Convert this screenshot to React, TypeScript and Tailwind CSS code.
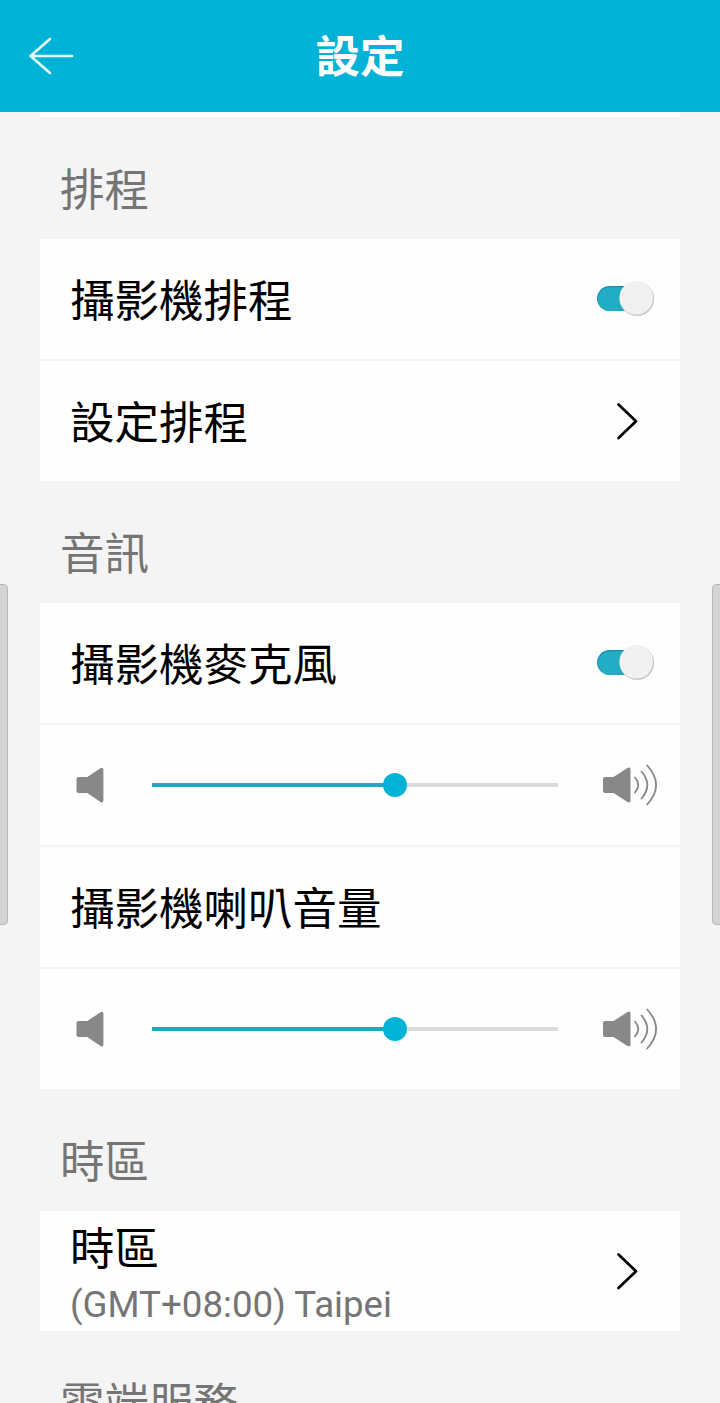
import { useState, type ReactNode } from 'react';

function Header({ title }: { title: string }) {
  return (
    <header className="relative flex h-28 shrink-0 items-center justify-center bg-[#00b2d5]">
      <button aria-label="返回" className="absolute left-7 top-8">
        <svg width="48" height="48" viewBox="0 0 48 48" fill="none" stroke="#e6ffff" strokeWidth="2.6" strokeLinecap="round" strokeLinejoin="round">
          <path d="M44 24H2.500M22 7L2.500 24 22 41" />
        </svg>
      </button>
      <h1 className="pt-1 text-[44.5px] leading-[64px] font-bold text-white">{title}</h1>
    </header>
  );
}

function Section({ title, children }: { title: string; children?: ReactNode }) {
  return (
    <section>
      <h2 className="h-[122px] pt-[42px] pl-5 text-[44.5px] leading-[64px] text-[#757575]">{title}</h2>
      <div className="flex flex-col gap-0.5">{children}</div>
    </section>
  );
}

function Row({ children }: { children: ReactNode }) {
  return <div className="flex h-[120px] items-center bg-[#fefefe] pl-[30px] text-black">{children}</div>;
}

function Label({ children }: { children: ReactNode }) {
  return <span className="flex-1 pt-1.5 text-[44.5px] leading-[64px]">{children}</span>;
}

function Toggle() {
  const [on, setOn] = useState(true);
  return (
    <button role="switch" aria-checked={on} onClick={() => setOn(!on)} className="mr-6 pb-0.5">
      <svg width="60" height="40" viewBox="0 0 60 40">
        <rect x="1" y="8" width="48" height="25" rx="12.5" fill={on ? '#168fb0' : '#aaaaaa'} />
        <rect x="2" y="9.3" width="47" height="23.7" rx="11.8" fill={on ? '#22adc5' : '#c4c4c4'} />
        <circle cx={on ? 41 : 19} cy="20.8" r="17.2" fill="#c9c9cb" />
        <circle cx={on ? 40.2 : 18.2} cy="19.8" r="16.8" fill="#f1f1f1" />
      </svg>
    </button>
  );
}

function Chevron() {
  return (
    <svg className="mr-10" width="26" height="40" viewBox="0 0 26 40" fill="none" stroke="#000" strokeWidth="2.7" strokeLinecap="round" strokeLinejoin="round">
      <path d="M4.500 3.500L22 20.300 4.500 37" />
    </svg>
  );
}

function SpeakerLow() {
  return (
    <svg width="28" height="42" viewBox="0 0 28 42" fill="#888888">
      <path d="M2.500 13h8.800L24.500 4.200Q27.400 3 27.400 5.800v30.800q0 2.800-2.900 1.400L11.300 29H2.500q-2 0-2-2V15q0-2 2-2z" />
    </svg>
  );
}

function SpeakerHigh() {
  return (
    <svg width="56" height="42" viewBox="0 0 56 42">
      <path d="M3 13h8.500L25.500 4Q28.500 2.700 28.500 5.500v31q0 2.800-3 1.500L11.500 29H3q-2 0-2-2V15q0-2 2-2z" fill="#888888" />
      <g fill="none" stroke="#888888" strokeWidth="1.8" strokeLinecap="round">
        <path d="M33 13.500q6.600 7.500 0 15" />
        <path d="M39.500 7.500q11.600 13.500 0 27" />
        <path d="M45.200 1.500q17.800 19.500 0 39" />
      </g>
    </svg>
  );
}

function Volume({ value }: { value: number }) {
  return (
    <Row>
      <span className="ml-1.5 w-[76px]">
        <SpeakerLow />
      </span>
      <div className="relative h-1 w-[406px] bg-[#dadada]">
        <div className="h-full bg-[#22a8be]" style={{ width: `${value}%` }} />
        <div className="absolute -top-2.5 size-6 -translate-x-1/2 rounded-full bg-[#00b2d5]" style={{ left: `${value}%` }} />
      </div>
      <span className="ml-11">
        <SpeakerHigh />
      </span>
    </Row>
  );
}

export default function App() {
  return (
    <div
      lang="zh-Hant"
      className="relative flex h-[1403px] w-[720px] flex-col overflow-hidden bg-[#f4f4f4] font-[Roboto,'Noto_Sans_CJK_TC',sans-serif]"
    >
      <Header title="設定" />
      <main className="min-h-0 flex-1 overflow-hidden px-10">
        <div className="h-[5px] bg-[#fefefe]" />
        <Section title="排程">
          <Row>
            <Label>攝影機排程</Label>
            <Toggle />
          </Row>
          <Row>
            <Label>設定排程</Label>
            <Chevron />
          </Row>
        </Section>
        <Section title="音訊">
          <Row>
            <Label>攝影機麥克風</Label>
            <Toggle />
          </Row>
          <Volume value={59.85} />
          <Row>
            <Label>攝影機喇叭音量</Label>
          </Row>
          <Volume value={59.85} />
        </Section>
        <Section title="時區">
          <Row>
            <div className="flex-1 pt-1">
              <div className="text-[44.5px] leading-[64px]">時區</div>
              <div className="text-[36.7px] leading-[46px] text-[#757575]">(GMT+08:00) Taipei</div>
            </div>
            <Chevron />
          </Row>
        </Section>
        <Section title="雲端服務" />
      </main>
      {/* edge handles */}
      <div className="absolute top-[584px] -left-1 h-[341px] w-3 rounded-[4px] border border-[#b9b9b9] bg-[#d4d4d4]" />
      <div className="absolute top-[584px] -right-1 h-[341px] w-3 rounded-[4px] border border-[#b9b9b9] bg-[#d4d4d4]" />
    </div>
  );
}
